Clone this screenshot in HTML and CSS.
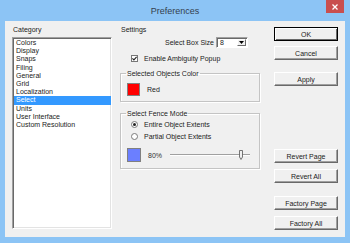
FILE: index.html
```html
<!DOCTYPE html>
<html>
<head>
<meta charset="utf-8">
<link rel="stylesheet" href="styles.css">
</head>
<body>
<div class="window">
  <div class="titlebar">
    <div></div>
    <div class="title">Preferences</div>
    <div class="close"><svg width="6" height="6" viewBox="0 0 6 6"><path d="M0.5 0.5 L5.5 5.5 M5.5 0.5 L0.5 5.5" stroke="#fff" stroke-width="1.3"/></svg></div>
  </div>
  <div class="client">
    <div class="col-cat">
      <div class="label">Category</div>
      <ul class="list">
        <li>Colors</li>
        <li>Display</li>
        <li>Snaps</li>
        <li>Filing</li>
        <li>General</li>
        <li>Grid</li>
        <li>Localization</li>
        <li class="selected">Select</li>
        <li>Units</li>
        <li>User Interface</li>
        <li>Custom Resolution</li>
      </ul>
    </div>
    <div class="col-settings">
      <div class="label">Settings</div>
      <div class="size-row">
        <span>Select Box Size</span>
        <div class="combo">
          <span class="combo-val">8</span>
          <span class="drop"><svg width="5" height="3" viewBox="0 0 5 3"><path d="M0 0 H5 L2.5 3 Z" fill="#000"/></svg></span>
        </div>
      </div>
      <div class="check-row">
        <span class="checkbox"><svg width="5" height="5" viewBox="0 0 5 5"><path d="M0.4 2.4 L1.9 3.9 L4.6 0.8" fill="none" stroke="#222" stroke-width="1.1"/></svg></span>
        <span>Enable Ambiguity Popup</span>
      </div>
      <fieldset class="group group-color">
        <legend>Selected Objects Color</legend>
        <div class="swatch-row">
          <span class="swatch swatch-red"></span>
          <span>Red</span>
        </div>
      </fieldset>
      <fieldset class="group group-fence">
        <legend>Select Fence Mode</legend>
        <div class="radio-row first">
          <span class="radio"><span class="dot"></span></span>
          <span>Entire Object Extents</span>
        </div>
        <div class="radio-row">
          <span class="radio"></span>
          <span>Partial Object Extents</span>
        </div>
        <div class="swatch-row fence-swatch">
          <span class="swatch swatch-blue"></span>
          <span class="pct">80%</span>
          <div class="slider">
            <div class="track"></div>
            <svg class="thumb" width="5" height="10" viewBox="0 0 5 10"><path d="M0.5 0.5 H3.5 V7 L2 9.5 L0.5 7 Z" fill="#f0f0f0" stroke="#555" stroke-width="0.8"/></svg>
          </div>
        </div>
      </fieldset>
    </div>
    <div class="col-buttons">
      <div class="btn btn-default b-ok">OK</div>
      <div class="btn b-cancel">Cancel</div>
      <div class="btn b-apply">Apply</div>
      <div class="btn b-revert-page">Revert Page</div>
      <div class="btn b-revert-all">Revert All</div>
      <div class="btn b-factory-page">Factory Page</div>
      <div class="btn b-factory-all">Factory All</div>
    </div>
  </div>
</div>
</body>
</html>
```
FILE: styles.css
```css
html, body {
  margin: 0;
  padding: 0;
}
body {
  width: 350px;
  height: 243px;
  overflow: hidden;
  font-family: "Liberation Sans", Arial, sans-serif;
  font-size: 7px;
  color: #222;
}
.window {
  width: 350px;
  height: 243px;
  box-sizing: border-box;
  background: #8cc4f5;
  padding: 0 5px 6px 5px;
  display: flex;
  flex-direction: column;
}
.titlebar {
  height: 22px;
  display: grid;
  grid-template-columns: 1fr auto 1fr;
  margin: 0 -5px;
}
.title {
  align-self: center;
  font-size: 9px;
  color: #34404e;
  padding-top: 1px;
}
.close {
  justify-self: end;
  align-self: start;
  width: 18px;
  height: 13px;
  margin-right: 6px;
  background: #c94f4f;
  display: flex;
  align-items: center;
  justify-content: center;
}
.client {
  flex: 1;
  background: #f0f0f0;
  display: flex;
  padding: 4px 7px 7px 7px;
  box-sizing: border-box;
}
.label {
  line-height: 9px;
  height: 9px;
  padding-left: 1px;
}
.col-cat {
  width: 100px;
  display: flex;
  flex-direction: column;
}
.list {
  list-style: none;
  margin: 3px 0 0 0;
  padding: 1px 0 0 0;
  height: 192px;
  box-sizing: border-box;
  background: #fff;
  border-style: solid;
  border-width: 1px;
  border-color: #a0a0a0 #ffffff #ffffff #a0a0a0;
  box-shadow: inset 1px 1px 0 #696969, inset -1px -1px 0 #e3e3e3;
}
.list li {
  height: 8.2px;
  line-height: 8.2px;
  padding-left: 2px;
  margin-left: 1px;
  white-space: nowrap;
}
.list li.selected {
  background: #3399ff;
  color: #fff;
}
.col-settings {
  width: 140px;
  margin-left: 8px;
  display: flex;
  flex-direction: column;
}
.size-row {
  margin-top: 3px;
  height: 11px;
  display: flex;
  align-items: center;
  justify-content: flex-end;
  padding-right: 12px;
  gap: 2px;
}
.combo {
  width: 32px;
  height: 11px;
  box-sizing: border-box;
  background: #fff;
  border-style: solid;
  border-width: 1px;
  border-color: #a0a0a0 #fff #fff #a0a0a0;
  box-shadow: inset 1px 1px 0 #696969;
  display: flex;
  align-items: stretch;
}
.combo-val {
  flex: 1;
  padding-left: 3px;
  line-height: 9px;
}
.drop {
  width: 9px;
  margin: 1px 1px 1px 0;
  background: #f0f0f0;
  box-sizing: border-box;
  border-style: solid;
  border-width: 1px;
  border-color: #fff #696969 #696969 #fff;
  display: flex;
  align-items: center;
  justify-content: center;
}
.check-row {
  margin-top: 6px;
  height: 9px;
  line-height: 9px;
  display: flex;
  align-items: center;
  padding-left: 11px;
  gap: 6px;
}
.checkbox {
  width: 7px;
  height: 7px;
  box-sizing: border-box;
  background: #fff;
  border: 1px solid #777;
  display: flex;
  align-items: center;
  justify-content: center;
}
.group {
  margin: 0;
  padding: 0 5px;
  border: 1px solid #c4c4c4;
  box-shadow: 1px 1px 0 #fff, inset 1px 1px 0 #fff;
  min-width: 0;
}
.group legend {
  padding: 0 1px;
  line-height: 9px;
  height: 9px;
}
.group-color {
  margin-top: 6px;
  padding-top: 5px;
  padding-bottom: 5px;
}
.group-fence {
  margin-top: 7px;
  padding-top: 2px;
  padding-bottom: 6px;
}
.swatch-row {
  display: flex;
  align-items: center;
  gap: 7px;
  margin-left: 1px;
}
.swatch {
  display: block;
  box-sizing: border-box;
  border: 1px solid #808080;
}
.swatch-red {
  width: 13px;
  height: 13px;
  background: #ff0000;
}
.swatch-blue {
  width: 14px;
  height: 14px;
  background: #6b7fff;
}
.radio-row {
  height: 9px;
  line-height: 9px;
  display: flex;
  align-items: center;
  padding-left: 5px;
  gap: 6px;
  margin-top: 3px;
}
.radio-row.first {
  margin-top: 0;
}
.radio {
  width: 7px;
  height: 7px;
  box-sizing: border-box;
  border-radius: 50%;
  background: #fff;
  border: 1px solid #7a7a7a;
  display: flex;
  align-items: center;
  justify-content: center;
}
.dot {
  width: 3px;
  height: 3px;
  border-radius: 50%;
  background: #222;
}
.fence-swatch {
  margin-top: 7px;
}
.pct {
  width: 15px;
  color: #333;
}
.slider {
  position: relative;
  width: 80px;
  height: 10px;
  display: flex;
  align-items: center;
}
.track {
  width: 100%;
  height: 0;
  border-top: 1px solid #a0a0a0;
  border-bottom: 1px solid #fff;
}
.thumb {
  position: absolute;
  left: 69px;
  top: 0;
}
.col-buttons {
  width: 64px;
  margin-left: 14px;
  display: flex;
  flex-direction: column;
}
.btn {
  height: 14px;
  box-sizing: border-box;
  background: #f0f0f0;
  border-style: solid;
  border-width: 1px;
  border-color: #fff #696969 #696969 #fff;
  box-shadow: inset -1px -1px 0 #a0a0a0;
  display: flex;
  align-items: center;
  justify-content: center;
  line-height: 9px;
}
.btn-default {
  border-color: #000;
  box-shadow: inset 1px 1px 0 #fff, inset -1px -1px 0 #696969;
}
.b-ok { margin-top: 2px; }
.b-cancel { margin-top: 5px; }
.b-apply { margin-top: 12px; }
.b-revert-page { margin-top: 63px; }
.b-revert-all { margin-top: 6px; }
.b-factory-page { margin-top: 13px; }
.b-factory-all { margin-top: 6px; }
```
